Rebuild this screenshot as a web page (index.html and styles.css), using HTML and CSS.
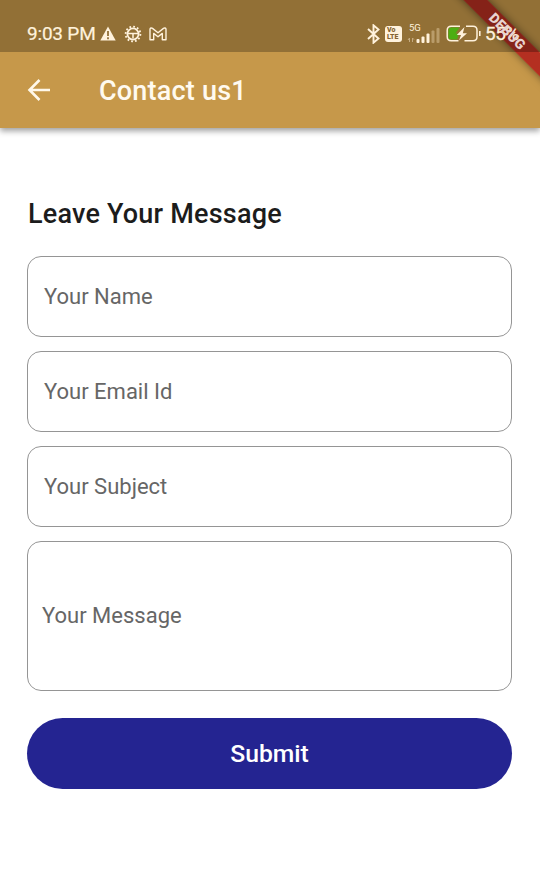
FILE: index.html
```html
<!DOCTYPE html>
<html lang="en">
<head>
<meta charset="utf-8">
<title>Contact us1</title>
<link rel="stylesheet" href="styles.css">
</head>
<body>
<div class="screen">
  <div class="status">
    <span class="clock">9:03 PM</span>
    <svg class="warning" width="16" height="15" viewBox="0 0 16 15"><path d="M8 .5 15.7 14.5H.3Z" fill="#fff2dc"/><path d="M8 5v5M8 11.3v2" stroke="#937038" stroke-width="1.8"/></svg>
    <svg class="gear" width="18" height="18" viewBox="0 0 18 18" fill="none" stroke="#fff2dc"><circle cx="9" cy="9" r="7.4" stroke-width="1.8" stroke-dasharray="1.8 2.07"/><circle cx="9" cy="9" r="5.6" stroke-width="1.8"/><path d="M4 8.500h10M9 8.500v5" stroke-width="1.500"/></svg>
    <svg class="mail" width="18" height="14" viewBox="0 0 18 14" fill="none" stroke="#fff2dc" stroke-width="1.4" stroke-linejoin="round"><path d="M1 12.8V2.3C1 .9 2.5.6 3.5 1.4L9 5.8l5.5-4.4c1-.8 2.5-.5 2.5.9v10.5h-3.7V6.4L9 9.8 4.7 6.4v6.4Z"/></svg>
    <svg class="bluetooth" width="13" height="20" viewBox="0 0 13 20" fill="none" stroke="#fff2dc" stroke-width="1.9"><path d="m1 5 10.5 9.5-5 4.2V1.3l5 4.2L1 15"/></svg>
    <span class="volte"><span>Vo</span><span>LTE</span></span>
    <span class="network">
      <span class="generation">5G</span>
      <svg width="33" height="15" viewBox="0 0 33 15"><path d="M2.5 10v4M1 12l1.5-2M5.5 14v-4l1.5 1.6" fill="none" stroke="#c5ab80"/><g fill="#fff2dc"><rect x="9.5" y="11" width="3" height="4" rx="1"/><rect x="14.500" y="8.5" width="3" height="6.5" rx="1"/><rect x="19.5" y="5.5" width="3" height="9.5" rx="1"/></g><g fill="#b99c6a"><rect x="24.500" y="2.5" width="3" height="12.5" rx="1"/><rect x="29.5" y="0" width="3" height="15" rx="1"/></g></svg>
    </span>
    <svg class="battery" width="36" height="17" viewBox="0 0 36 17"><path d="M5 2.5h8.5l-4 6h3.4l-1.8 6H5Q2.5 14.5 2.5 12V5Q2.5 2.5 5 2.5Z" fill="#4cae13"/><path d="M14 1.2H5.200Q1.200 1.200 1.200 5.200V11.800Q1.200 15.800 5.200 15.800H12.500M18.500 15.800H27Q31 15.800 31 11.800V5.200Q31 1.200 27 1.200H20" fill="none" stroke="#fff2dc" stroke-width="1.500"/><path d="M18.500 2 10.800 10h4.200l-2 5.500L21 8.200h-4.200Z" fill="#fff2dc"/><path d="M33.800 6v5" stroke="#fff2dc" stroke-width="1.600"/></svg>
    <span class="percent">55%</span>
  </div>
  <header class="appbar">
    <svg class="back" width="24" height="22" viewBox="0 0 24 22" fill="none" stroke="#fff8ea" stroke-width="2.600"><path d="M23 11H3M12.500 1 2.500 11l10 10"/></svg>
    <h1>Contact us1</h1>
  </header>
  <main>
    <h2>Leave Your Message</h2>
    <div class="field">Your Name</div>
    <div class="field">Your Email Id</div>
    <div class="field">Your Subject</div>
    <div class="field message">Your Message</div>
    <button type="button">Submit</button>
  </main>
  <div class="debug ribbon"></div>
  <div class="debug label">DEBUG</div>
</div>
</body>
</html>
```
FILE: styles.css
```css
* { box-sizing: border-box; }
body { margin: 0; font-family: Roboto, sans-serif; background: #fff; }
.screen {
  position: relative;
  width: 540px;
  height: 876px;
  overflow: hidden;
  background: linear-gradient(#c6984a 52px, #fff 52px);
}
/* Translucent scrim over the app's top edge and debug banner. */
.status {
  position: relative;
  z-index: 2;
  display: flex;
  align-items: center;
  height: 52px;
  padding: 15px 0 0 27px;
  background: rgba(0, 0, 0, .26);
  color: #fff2dc;
}
.status svg { flex: none; display: block; }
.clock { width: 73px; font-size: 19px; line-height: 22px; white-space: nowrap; letter-spacing: -.2px; -webkit-text-stroke: .2px; }
.gear { margin-left: 8px; }
.mail { margin-left: 7px; }
.bluetooth { margin-left: 200px; }
.volte {
  display: flex;
  flex-direction: column;
  flex: none;
  width: 17px;
  height: 16px;
  margin-left: 5px;
  padding: 1px 1px 0 2px;
  border-radius: 3px;
  background: #fff2dc;
  color: #856431;
  font-size: 7px;
  line-height: 7px;
  font-weight: 900;
}
.network { display: flex; flex: none; flex-direction: column; position: relative; width: 33px; height: 18px; margin-left: 5px; justify-content: flex-end; }
.generation { position: absolute; left: 2px; top: -2px; font-size: 9.5px; line-height: 10px; }
.battery { margin-left: 6px; }
.percent { margin-left: 3px; font-size: 19px; line-height: 22px; letter-spacing: -.5px; -webkit-text-stroke: .3px; }
.appbar {
  display: flex;
  align-items: center;
  height: 76px;
  padding-left: 27px;
  background: #c6984a;
  box-shadow: 0 3px 6px rgba(0, 0, 0, .38);
  clip-path: inset(0 0 -14px 0);
}
h1 { margin: 2px 0 0 48px; color: #fffaf0; font-size: 27px; line-height: 32px; font-weight: 500; letter-spacing: .2px; }
main { display: flex; flex-direction: column; padding: 70px 28px 0 27px; }
h2 { margin: 0 0 26px 1px; color: #1c1c1c; font-size: 27px; line-height: 32px; font-weight: 500; letter-spacing: .2px; }
.field {
  display: flex;
  align-items: center;
  height: 81px;
  margin-bottom: 14px;
  padding-left: 16px;
  border: 1px solid #959595;
  border-radius: 14px;
  color: #666;
  font-size: 22px;
}
.message { height: 150px; margin-bottom: 27px; padding: 0 0 2px 14px; }
button {
  height: 71px;
  border: 0;
  border-radius: 36px;
  background: #242491;
  color: #fff;
  font: 500 24.7px/30px Roboto, sans-serif;
}
.debug {
  position: absolute;
  left: 437px;
  top: 23px;
  width: 140px;
  height: 17px;
  transform: rotate(45deg);
}
.ribbon {
  z-index: 1;
  background: rgba(176, 24, 24, .82);
  box-shadow: 0 0 8px rgba(0, 0, 0, .5);
}
.label {
  z-index: 3;
  color: #e8d3d0;
  font-size: 14px;
  line-height: 17px;
  font-weight: 900;
  text-align: center;
}
```
